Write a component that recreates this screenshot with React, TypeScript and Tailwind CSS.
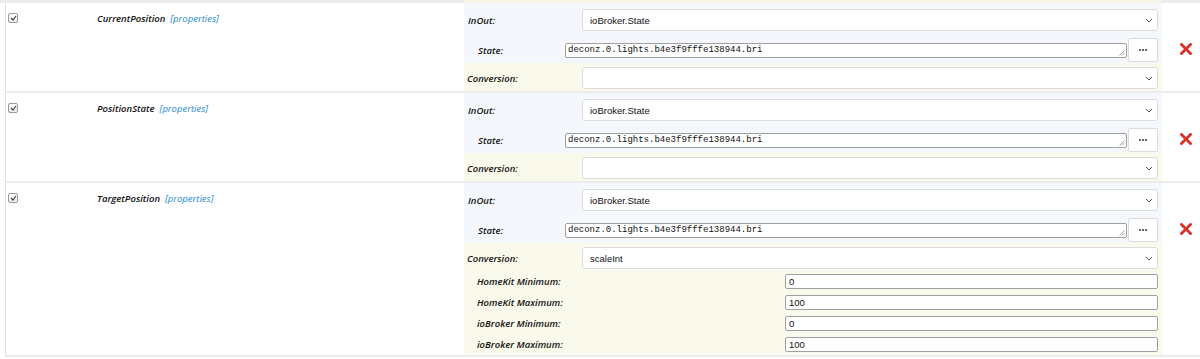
import React from "react";

type Param = { label: string; value: string };

interface AccessoryRowProps {
  name: string;
  conversion: string;
  params?: Param[];
}

const STATE_ID = "deconz.0.lights.b4e3f9fffe138944.bri";

const Chevron = () => (
  <svg width="8" height="5" viewBox="0 0 8 5" className="shrink-0">
    <path d="M1 1 L4 4 L7 1" fill="none" stroke="#555" strokeWidth="1" />
  </svg>
);

const SelectBox = ({ value }: { value: string }) => (
  <div className="flex h-[22px] flex-1 items-center justify-between rounded-[3px] border border-[#dcdcdc] bg-white pl-[7px] pr-[4px] font-['Liberation_Sans',sans-serif] text-[9.5px] text-[#111]">
    <span>{value}</span>
    <Chevron />
  </div>
);

const CheckBox = () => (
  <div className="flex h-[10px] w-[10px] items-center justify-center rounded-[2px] border border-[#9a9a9a] bg-gradient-to-b from-white to-[#ececec]">
    <svg width="7" height="6" viewBox="0 0 7 6">
      <path d="M1 3 L3 5 L6 1" fill="none" stroke="#444" strokeWidth="1.2" />
    </svg>
  </div>
);

const RemoveIcon = () => (
  <svg width="12" height="12" viewBox="0 0 12 12">
    <path d="M1.5 1.5 L10.5 10.5 M10.5 1.5 L1.5 10.5" stroke="#d9302b" strokeWidth="2.8" strokeLinecap="square" />
  </svg>
);

const Label = ({ children }: { children: React.ReactNode }) => (
  <span className="font-['Open_Sans',sans-serif] text-[9.5px] font-semibold italic text-[#111]">{children}</span>
);

const AccessoryRow: React.FC<AccessoryRowProps> = ({ name, conversion, params }) => {
  return (
    <div className="ml-[5px] flex border-b-2 border-l border-b-[#ececec] border-l-[#e2e2e2]">
      {/* checkbox */}
      <div className="w-[86px] pl-[2px] pt-[10px]">
        <CheckBox />
      </div>

      {/* name */}
      <div className="w-[372px] pl-[5px] pt-[8px] font-['Open_Sans',sans-serif] text-[9.5px] italic">
        <span className="font-semibold text-[#111]">{name}</span>
        <span className="ml-[5px] text-[#1e8bd3]">[properties]</span>
      </div>

      {/* settings panel */}
      <div className="w-[698px]">
        <div className="bg-[#f4f8fd]">
          <div className="flex h-[32px] items-center pb-[4px] pr-[4px] pt-[6px]">
            <div className="w-[118px] pl-[4px]">
              <Label>InOut:</Label>
            </div>
            <SelectBox value="ioBroker.State" />
          </div>
          <div className="flex h-[28px] items-center pb-[1px] pr-[4px] pt-[3px]">
            <div className="w-[101px] pl-[14px]">
              <Label>State:</Label>
            </div>
            <div className="relative flex h-[15px] flex-1 items-center rounded-[2px] border border-[#a0a0a0] bg-white pl-[2px] font-['Liberation_Mono',monospace] text-[9px] text-[#111]">
              {STATE_ID}
              <svg width="6" height="6" viewBox="0 0 6 6" className="absolute bottom-[1px] right-[1px]">
                <path d="M0.5 5.5 L5.5 0.5 M3 5.5 L5.5 3" stroke="#888" strokeWidth="0.8" />
              </svg>
            </div>
            <div className="ml-[1px] flex h-[24px] w-[30px] items-center justify-center gap-[1px] rounded-[2px] border border-[#dcdcdc] bg-white">
              <span className="h-[2px] w-[2px] rounded-full bg-[#333]" />
              <span className="h-[2px] w-[2px] rounded-full bg-[#333]" />
              <span className="h-[2px] w-[2px] rounded-full bg-[#333]" />
            </div>
          </div>
        </div>
        <div className="bg-[#fafaec]">
          <div className="flex h-[28px] items-center pb-[2px] pr-[4px] pt-[4px]">
            <div className="w-[118px] pl-[3px]">
              <Label>Conversion:</Label>
            </div>
            <SelectBox value={conversion} />
          </div>
          {params?.map((p) => (
            <div key={p.label} className="flex h-[21px] items-start pr-[4px] pt-[3px]">
              <div className="w-[321px] pl-[13px]">
                <Label>{p.label}</Label>
              </div>
              <input
                readOnly
                defaultValue={p.value}
                className="h-[15px] flex-1 rounded-[2px] border border-[#a0a0a0] bg-white px-[3px] font-['Liberation_Sans',sans-serif] text-[9.5px] text-[#111] outline-none"
              />
            </div>
          ))}
        </div>
      </div>

      {/* remove */}
      <div className="flex-1 pl-[18px] pt-[40px]">
        <RemoveIcon />
      </div>
    </div>
  );
};

export default function App() {
  return (
    <div className="h-[359px] w-[1200px] overflow-hidden bg-white text-[9.5px] leading-[15px]">
      <div className="flex h-[3px]">
        <div className="w-[464px] bg-[#ececec]" />
        <div className="w-[698px] bg-[#f5f5e6]" />
        <div className="flex-1 bg-[#ececec]" />
      </div>
      <AccessoryRow name="CurrentPosition" conversion="" />
      <AccessoryRow name="PositionState" conversion="" />
      <AccessoryRow
        name="TargetPosition"
        conversion="scaleInt"
        params={[
          { label: "HomeKit Minimum:", value: "0" },
          { label: "HomeKit Maximum:", value: "100" },
          { label: "ioBroker Minimum:", value: "0" },
          { label: "ioBroker Maximum:", value: "100" },
        ]}
      />
    </div>
  );
}
